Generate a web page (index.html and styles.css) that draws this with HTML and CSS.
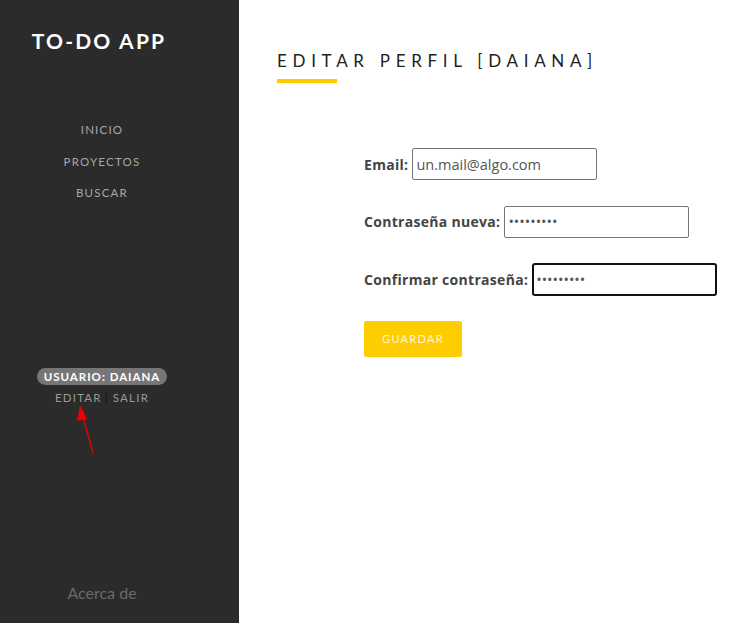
FILE: index.html
```html
<!DOCTYPE html>
<html lang="es">
<head>
<meta charset="utf-8">
<title>To-Do App</title>
<link rel="stylesheet" href="styles.css">
</head>
<body>
<div class="app">
  <aside class="sidebar">
    <h1 class="brand">TO-DO APP</h1>
    <nav class="nav">
      <a href="#">INICIO</a>
      <a href="#">PROYECTOS</a>
      <a href="#">BUSCAR</a>
    </nav>
    <div class="user">
      <span class="badge">USUARIO: DAIANA</span>
      <div class="user-links"><a href="#">EDITAR</a><span class="sep">|</span><a href="#">SALIR</a></div>
      <svg class="arrow" width="30" height="60" viewBox="0 0 30 60">
        <line x1="20" y1="56" x2="9" y2="16" stroke="#e00" stroke-width="1.3"/>
        <polygon points="7,8 14,22 4,24" fill="#e00"/>
      </svg>
    </div>
    <a class="about" href="#">Acerca de</a>
  </aside>
  <main class="main">
    <h2 class="title">EDITAR PERFIL [DAIANA]</h2>
    <form class="form">
      <div class="row"><label>Email:</label><input type="text" value="un.mail@algo.com"></div>
      <div class="row"><label>Contraseña nueva:</label><input type="password" value="123456789"></div>
      <div class="row"><label>Confirmar contraseña:</label><input class="focus" type="password" value="123456789"></div>
      <button type="button" class="btn">GUARDAR</button>
    </form>
  </main>
</div>
</body>
</html>
```
FILE: styles.css
```css
* { box-sizing: border-box; }
html, body { margin: 0; padding: 0; height: 100%; }
body { font-family: "Open Sans", "Noto Sans", sans-serif; background: #fff; }
a { text-decoration: none; }
.app { display: flex; height: 623px; }
.sidebar {
  width: 239px; flex: none; background: #2b2b2b;
  display: flex; flex-direction: column; align-items: center;
  padding: 27px 35px 0 0;
}
.brand {
  margin: 0; color: #fff; font-size: 21px; font-weight: 700; padding-right: 6px;
  letter-spacing: 2.2px; font-family: "Lato", sans-serif; line-height: 28px;
}
.nav { display: flex; flex-direction: column; align-items: center; margin-top: 66px; gap: 13.5px; }
.nav a { color: #a6a6a6; font-size: 11.5px; letter-spacing: 1.2px; line-height: 18px; font-family: "Lato", sans-serif; }
.user { position: relative; margin-top: 166px; display: flex; flex-direction: column; align-items: center; }
.badge {
  background: #767676; color: #fff; font-weight: 700; font-size: 11.5px; letter-spacing: 1px;
  border-radius: 9px; padding: 0 7px; line-height: 17px; font-family: "Lato", sans-serif;
}
.user-links { margin-top: 4px; font-size: 11.5px; letter-spacing: 1.2px; color: #9a9a9a; font-family: "Lato", sans-serif; line-height: 18px; }
.user-links a { color: #9a9a9a; }
.sep { color: #111; margin: 0 4px 0 3px; }
.arrow { position: absolute; left: 36px; top: 29px; }
.about { margin-top: auto; margin-bottom: 21px; color: #6a6a6a; font-size: 16px; font-family: "Lato", sans-serif; }
.main { flex: 1; padding: 48px 0 0 38px; }
.title {
  margin: 0; font-weight: 400; font-size: 17px; letter-spacing: 5.7px; color: #222;
  line-height: 26px; font-family: "Lato", sans-serif; padding-bottom: 6px; position: relative;
}
.title::after { content: ""; display: block; width: 60px; height: 4px; background: #ffcc00; margin-top: 5px; }
.form { margin: 59px 0 0 87px; display: flex; flex-direction: column; align-items: flex-start; }
.row { display: flex; align-items: center; gap: 4px; margin-bottom: 25.5px; }
.row label { color: #444; font-weight: 700; font-size: 14px; letter-spacing: 0.3px; }
.row input {
  width: 185px; height: 32px; border: 1px solid #777; border-radius: 2px; padding: 0 3px;
  font-family: "Open Sans", sans-serif; font-size: 14.5px; color: #555; outline: none;
}
.row input.focus { border: 2px solid #111; border-radius: 3px; height: 33px; padding: 0 2px; }
.btn {
  margin-top: -1px; width: 98px; height: 36px; background: #ffcc00; border: none; border-radius: 2px;
  color: #fff8d8; font-size: 11px; letter-spacing: 1.3px; font-family: "Lato", sans-serif;
}
```
